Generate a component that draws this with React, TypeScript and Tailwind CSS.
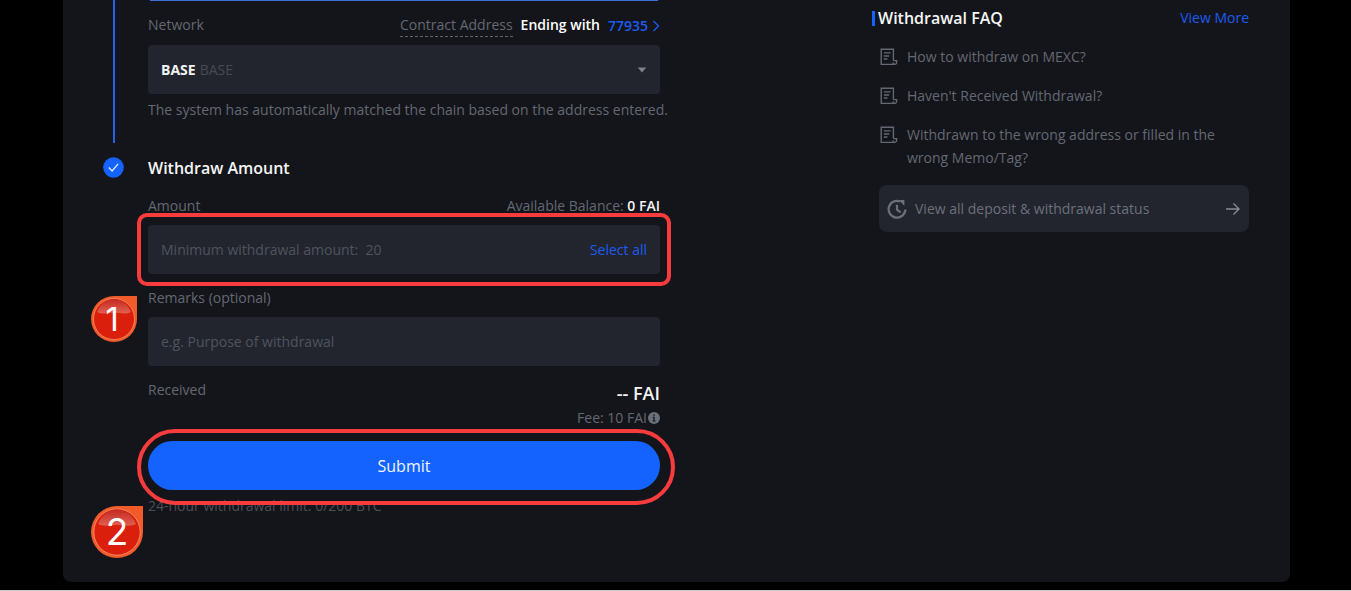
import type { ReactNode } from "react";

const faqs = [
  "How to withdraw on MEXC?",
  "Haven't Received Withdrawal?",
  "Withdrawn to the wrong address or filled in the wrong Memo/Tag?",
];

function DocIcon() {
  return (
    <svg viewBox="0 0 18 18" className="mt-[3px] h-[18px] w-[18px] shrink-0" fill="none" stroke="currentColor" strokeWidth="1.4" aria-hidden="true">
      <path d="M13.400 12.500V1.200H1.200v15.200h13.200" />
      <path d="M13.400 12.600h3.200v2a1.800 1.800 0 0 1-3.600 0" />
      <path d="M3.800 4.900h6.800M3.800 8h5.400M3.800 11h3.600" />
    </svg>
  );
}

function ClockIcon() {
  return (
    <svg viewBox="0 0 20 20" className="h-5 w-5 shrink-0" fill="none" stroke="currentColor" strokeWidth="2.2" aria-hidden="true">
      <path d="M18.400 10.500A8.400 8.400 0 1 1 13 2.400" />
      <path d="M10 5.800v4.800l3.600 2.800" />
      <path d="M11.600 1h5.800v5.800z" fill="currentColor" stroke="none" />
    </svg>
  );
}

function Marker({ id, size, children }: { id: string; size: number; children: ReactNode }) {
  return (
    <svg viewBox="0 0 52 52" width={size} height={size} aria-hidden="true">
      <defs>
        <linearGradient id={id} x1="0" y1="0" x2="0" y2="1">
          <stop offset="0" stopColor="#c32a22" />
          <stop offset="1" stopColor="#e2604f" />
        </linearGradient>
      </defs>
      <path d="M26 0h26v26A26 26 0 1 1 26 0z" fill="#f15a29" />
      <circle cx="26" cy="26" r="23.200" fill="#da1f0c" stroke="#f79a72" strokeWidth="0.800" />
      <path d="M7 18C10.500 9 17.500 3.800 26 3.800S41.500 9 45 18C40 21 33 19 26 19S12 21 7 18z" fill={`url(#${id})`} />
      {children}
    </svg>
  );
}

export default function App() {
  return (
    <div className="border-b border-[#c8c8c8] bg-black pb-2 font-['Open_Sans','Noto_Sans',sans-serif] text-sm leading-[22px] text-[#636873]">
      <main className="mr-[61px] ml-[63px] flex items-start justify-between gap-8 rounded-b-lg bg-[#14151a] pr-[41px] pb-[65px] pl-10">
        <ol className="max-w-[557px] flex-1">
          <li className="flex gap-6">
            <div className="flex w-[21px] shrink-0 justify-center">
              <div className="w-0.5 bg-[#2462e8]" />
            </div>
            <div className="min-w-0 flex-1 pb-[22px]">
              <div className="mx-0.5 h-px bg-[#3f6fd8]" />
              <div className="mt-[13px] flex h-[31px] items-start justify-between">
                <label htmlFor="network">Network</label>
                <p className="flex gap-2">
                  <span className="border-b border-dashed border-[#5f646f]">Contract Address</span>
                  <span className="font-semibold text-white">Ending with</span>
                  <a href="#contract" className="flex items-center gap-1 font-semibold text-[#1d5bf0]">
                    77935
                    <svg viewBox="0 0 8 12" className="h-3 w-2" fill="none" stroke="currentColor" strokeWidth="1.3" aria-hidden="true">
                      <path d="M1.500 1l5 5-5 5" />
                    </svg>
                  </a>
                </p>
              </div>
              <div className="flex h-[49px] items-center gap-1 rounded bg-[#22252e] px-[13px]">
                <select id="network" className="field-sizing-content appearance-none bg-transparent font-bold text-[#f2f3f5] outline-none">
                  <option>BASE</option>
                </select>
                <span className="text-[#464a54]">BASE</span>
                <svg viewBox="0 0 10 6" className="ml-auto h-1.5 w-2.5" fill="#7d828c" aria-hidden="true">
                  <path d="M.8.5h8.400L5 5.500z" />
                </svg>
              </div>
              <p className="mt-[5px] lg:whitespace-nowrap">The system has automatically matched the chain based on the address entered.</p>
            </div>
          </li>

          <li className="mt-3.5 flex gap-6">
            <svg viewBox="0 0 21 21" className="h-[21px] w-[21px] shrink-0" fill="none" aria-hidden="true">
              <circle cx="10.500" cy="10.500" r="10.300" fill="#1463fe" />
              <path d="M5.800 10.600l3.300 3.300 6-7" stroke="#dfe9ff" strokeWidth="1.400" />
            </svg>
            <div className="min-w-0 flex-1">
              <h2 className="text-base leading-[22px] font-semibold text-[#f5f5f6]">Withdraw Amount</h2>
              <div className="mt-4 flex justify-between">
                <label htmlFor="amount">Amount</label>
                <p>
                  Available Balance: <span className="font-semibold text-[#f2f3f5]">0 FAI</span>
                </p>
              </div>
              <div className="relative mt-2 flex h-[49px] items-center rounded bg-[#22252e] px-[13px]">
                <input
                  id="amount"
                  type="text"
                  placeholder={"Minimum withdrawal amount:\u00a0 20"}
                  className="min-w-0 flex-1 bg-transparent outline-none placeholder:text-[#4f535d]"
                />
                <button type="button" className="text-[#1d5bf0]">
                  Select all
                </button>
                <div className="pointer-events-none absolute -top-3 -right-[11px] -bottom-3 -left-[11px] rounded-[10px] border-4 border-[#f83b3d]" />
              </div>

              <div className="relative mt-[13px]">
                <label htmlFor="remarks" className="block">
                  Remarks (optional)
                </label>
                <input
                  id="remarks"
                  type="text"
                  placeholder="e.g. Purpose of withdrawal"
                  className="mt-2 block h-[49px] w-full rounded bg-[#22252e] px-[13px] outline-none placeholder:text-[#4f535d]"
                />
                <div className="absolute top-[9px] -left-[57px]">
                  <Marker id="gloss-1" size={46}>
                    <text x="24" y="39.500" textAnchor="middle" fontFamily="Inter, sans-serif" fontSize="37" fill="#fff">
                      1
                    </text>
                  </Marker>
                </div>
              </div>

              <div className="mt-[13px] flex justify-between">
                <span>Received</span>
                <div className="text-right">
                  <p className="text-lg leading-7 font-semibold text-[#f2f3f5]">-- FAI</p>
                  <p className="flex items-center justify-end gap-px">
                    Fee: 10 FAI
                    <svg viewBox="0 0 12 12" className="h-3 w-3" aria-hidden="true">
                      <circle cx="6" cy="6" r="6" fill="#6a6f79" />
                      <path d="M6 2.500v1.500M4.800 5.300H6v3.700M4.600 9h2.900" stroke="#14151a" strokeWidth="1.200" fill="none" />
                    </svg>
                  </p>
                </div>
              </div>

              <div className="relative mt-3">
                <button type="button" className="block h-[49px] w-full rounded-full bg-[#1463fe] text-base text-[#f2f6ff]">
                  Submit
                </button>
                <div className="pointer-events-none absolute -top-3 -right-[15px] -bottom-[15px] -left-[11px] z-10 rounded-full border-4 border-[#f83b3d]" />
              </div>
              <div className="relative mt-[5px] text-[#4b4f59]">
                <p>24-hour withdrawal limit: 0/200 BTC</p>
                <div className="absolute top-[11px] -left-[57px]">
                  <Marker id="gloss-2" size={52}>
                    <text x="26" y="39" textAnchor="middle" fontFamily="Inter, sans-serif" fontSize="37" fill="#fff">
                      2
                    </text>
                  </Marker>
                </div>
              </div>
            </div>
          </li>
        </ol>

        <aside className="w-[377px] pt-[7px]">
          <div className="flex items-center justify-between">
            <h2 className="flex items-center gap-[3px] text-base leading-[22px] font-semibold text-[#f5f5f6]">
              <span className="h-[15px] w-[3px] bg-[#1463fe]" />
              Withdrawal FAQ
            </h2>
            <a href="#faq" className="text-[#1d5bf0]">
              View More
            </a>
          </div>
          <ul className="mt-4 flex flex-col gap-4 pl-2 leading-[23px]">
            {faqs.map((q) => (
              <li key={q}>
                <a href="#article" className="flex gap-[9px]">
                  <DocIcon />
                  <span className="flex-1">{q}</span>
                </a>
              </li>
            ))}
          </ul>
          <a href="#status" className="mt-4 ml-[7px] flex h-[47px] items-center gap-2 rounded-lg bg-[#22252e] px-2 text-[#6b707b]">
            <ClockIcon />
            View all deposit &amp; withdrawal status
            <svg viewBox="0 0 16 14" className="ml-auto h-3.5 w-4" fill="none" stroke="#868b95" strokeWidth="1.400" aria-hidden="true">
              <path d="M1 7h13M8.500 1.500L14 7l-5.500 5.500" />
            </svg>
          </a>
        </aside>
      </main>
    </div>
  );
}
